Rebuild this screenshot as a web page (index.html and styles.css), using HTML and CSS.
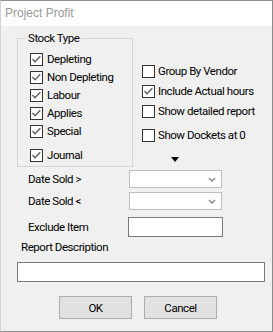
FILE: index.html
```html
<!DOCTYPE html>
<html lang="en">
<head>
    <meta charset="UTF-8">
    <meta name="viewport" content="width=device-width, initial-scale=1.0">
    <title>Project Profit</title>
    <link rel="stylesheet" href="styles.css">
</head>
<body>
    <div class="window">
        <div class="titlebar">Project Profit</div>

        <div class="content">
            <div class="top">
                <fieldset class="group">
                    <legend>Stock Type</legend>
                    <div class="checks">
                        <label class="check"><span class="box"><svg viewBox="0 0 11 11"><polyline points="1.5,5 4,7.8 9.3,2.3"/></svg></span>Depleting</label>
                        <label class="check"><span class="box"><svg viewBox="0 0 11 11"><polyline points="1.5,5 4,7.8 9.3,2.3"/></svg></span>Non Depleting</label>
                        <label class="check"><span class="box"><svg viewBox="0 0 11 11"><polyline points="1.5,5 4,7.8 9.3,2.3"/></svg></span>Labour</label>
                        <label class="check"><span class="box"><svg viewBox="0 0 11 11"><polyline points="1.5,5 4,7.8 9.3,2.3"/></svg></span>Applies</label>
                        <label class="check"><span class="box"><svg viewBox="0 0 11 11"><polyline points="1.5,5 4,7.8 9.3,2.3"/></svg></span>Special</label>
                        <label class="check journal"><span class="box"><svg viewBox="0 0 11 11"><polyline points="1.5,5 4,7.8 9.3,2.3"/></svg></span>Journal</label>
                    </div>
                </fieldset>

                <div class="options">
                    <label class="check"><span class="box"></span>Group By Vendor</label>
                    <label class="check"><span class="box"><svg viewBox="0 0 11 11"><polyline points="1.5,5 4,7.8 9.3,2.3"/></svg></span>Include Actual hours</label>
                    <label class="check"><span class="box"></span>Show detailed report</label>
                    <label class="check dockets"><span class="box"></span>Show Dockets at 0</label>
                    <span class="arrow"></span>
                </div>
            </div>

            <div class="field-row first">
                <span class="field-label">Date Sold &gt;</span>
                <span class="combo"><svg viewBox="0 0 8 5"><polyline points="1,1 4,4 7,1"/></svg></span>
            </div>
            <div class="field-row">
                <span class="field-label">Date Sold &lt;</span>
                <span class="combo"><svg viewBox="0 0 8 5"><polyline points="1,1 4,4 7,1"/></svg></span>
            </div>
            <div class="field-row exclude">
                <span class="field-label">Exclude Item</span>
                <span class="textbox"></span>
            </div>

            <div class="desc-label">Report Description</div>
            <div class="textbox desc"></div>

            <div class="buttons">
                <button class="btn">OK</button>
                <button class="btn">Cancel</button>
            </div>
        </div>
    </div>
</body>
</html>
```

FILE: styles.css
```css
* {
    margin: 0;
    padding: 0;
    box-sizing: border-box;
}

body {
    background: #ffffff;
    font-family: Roboto, 'Liberation Sans', Arial, sans-serif;
    font-size: 11.5px;
    letter-spacing: -0.45px;
    color: #000;
}

.window {
    width: 273px;
    height: 332px;
    background: #f0f0f0;
    border: 1px solid #8c8c8c;
    border-left-color: #d4d4d4;
    overflow: hidden;
}

.titlebar {
    height: 25px;
    line-height: 25px;
    padding-left: 4px;
    background: #fff;
    color: #999;
    font-family: 'Liberation Sans', Arial, sans-serif;
    font-size: 12px;
    letter-spacing: 0;
}

.content {
    display: flex;
    flex-direction: column;
}

.top {
    display: flex;
    align-items: flex-start;
    margin-top: 5px;
}

/* Stock Type group */
.group {
    width: 116px;
    margin-left: 16px;
    padding: 0 0 3px;
    border: 1px solid #d5d5d5;
    min-width: 0;
}

.group legend {
    margin-left: 8px;
    padding: 0 2px;
    line-height: 15px;
}

.checks {
    display: flex;
    flex-direction: column;
    gap: 3px;
    padding: 6px 0 0 12px;
}

.check {
    display: flex;
    align-items: center;
    height: 15px;
    line-height: 15px;
    white-space: nowrap;
}

.box {
    width: 13px;
    height: 13px;
    margin-right: 4px;
    border: 1px solid #333;
    background: #fff;
    flex-shrink: 0;
    display: flex;
}

.box svg {
    width: 11px;
    height: 11px;
}

.box polyline {
    fill: none;
    stroke: #5c5c5c;
    stroke-width: 1.3;
}

.journal {
    margin-top: 6px;
}

/* right hand options */
.options {
    display: flex;
    flex-direction: column;
    gap: 5px;
    margin: 33px 0 0 9px;
}

.options .box {
    margin-right: 3px;
}

.dockets {
    margin-top: 4px;
}

.arrow {
    width: 0;
    height: 0;
    margin: 9px 0 0 29px;
    border-left: 4px solid transparent;
    border-right: 4px solid transparent;
    border-top: 5px solid #000;
}

/* date / exclude fields */
.field-row {
    display: flex;
    align-items: center;
    margin: 4px 0 0 27px;
}

.field-row.first {
    margin-top: 3px;
}

.field-row.exclude {
    margin-top: 7px;
}

.field-label {
    width: 101px;
    line-height: 15px;
}

.combo {
    width: 93px;
    height: 18px;
    border: 1px solid #bdbdbd;
    background: #fff;
    display: flex;
    align-items: center;
    justify-content: flex-end;
    padding-right: 5px;
}

.combo svg {
    width: 8px;
    height: 5px;
}

.combo polyline {
    fill: none;
    stroke: #8f8f8f;
    stroke-width: 1.6;
}

.textbox {
    display: block;
    height: 20px;
    background: #fff;
    border: 1px solid #7a7a7a;
}

.exclude .textbox {
    width: 95px;
    margin-left: -1px;
}

.desc-label {
    margin: 3px 0 0 20px;
    line-height: 15px;
}

.textbox.desc {
    width: 248px;
    margin: 7px 0 0 16px;
}

.buttons {
    display: flex;
    gap: 12px;
    margin: 14px 0 0 58px;
}

.btn {
    width: 73px;
    height: 23px;
    background: #e1e1e1;
    border: 1px solid #adadad;
    font-family: inherit;
    font-size: 11.5px;
    letter-spacing: -0.45px;
    color: #000;
}
```
